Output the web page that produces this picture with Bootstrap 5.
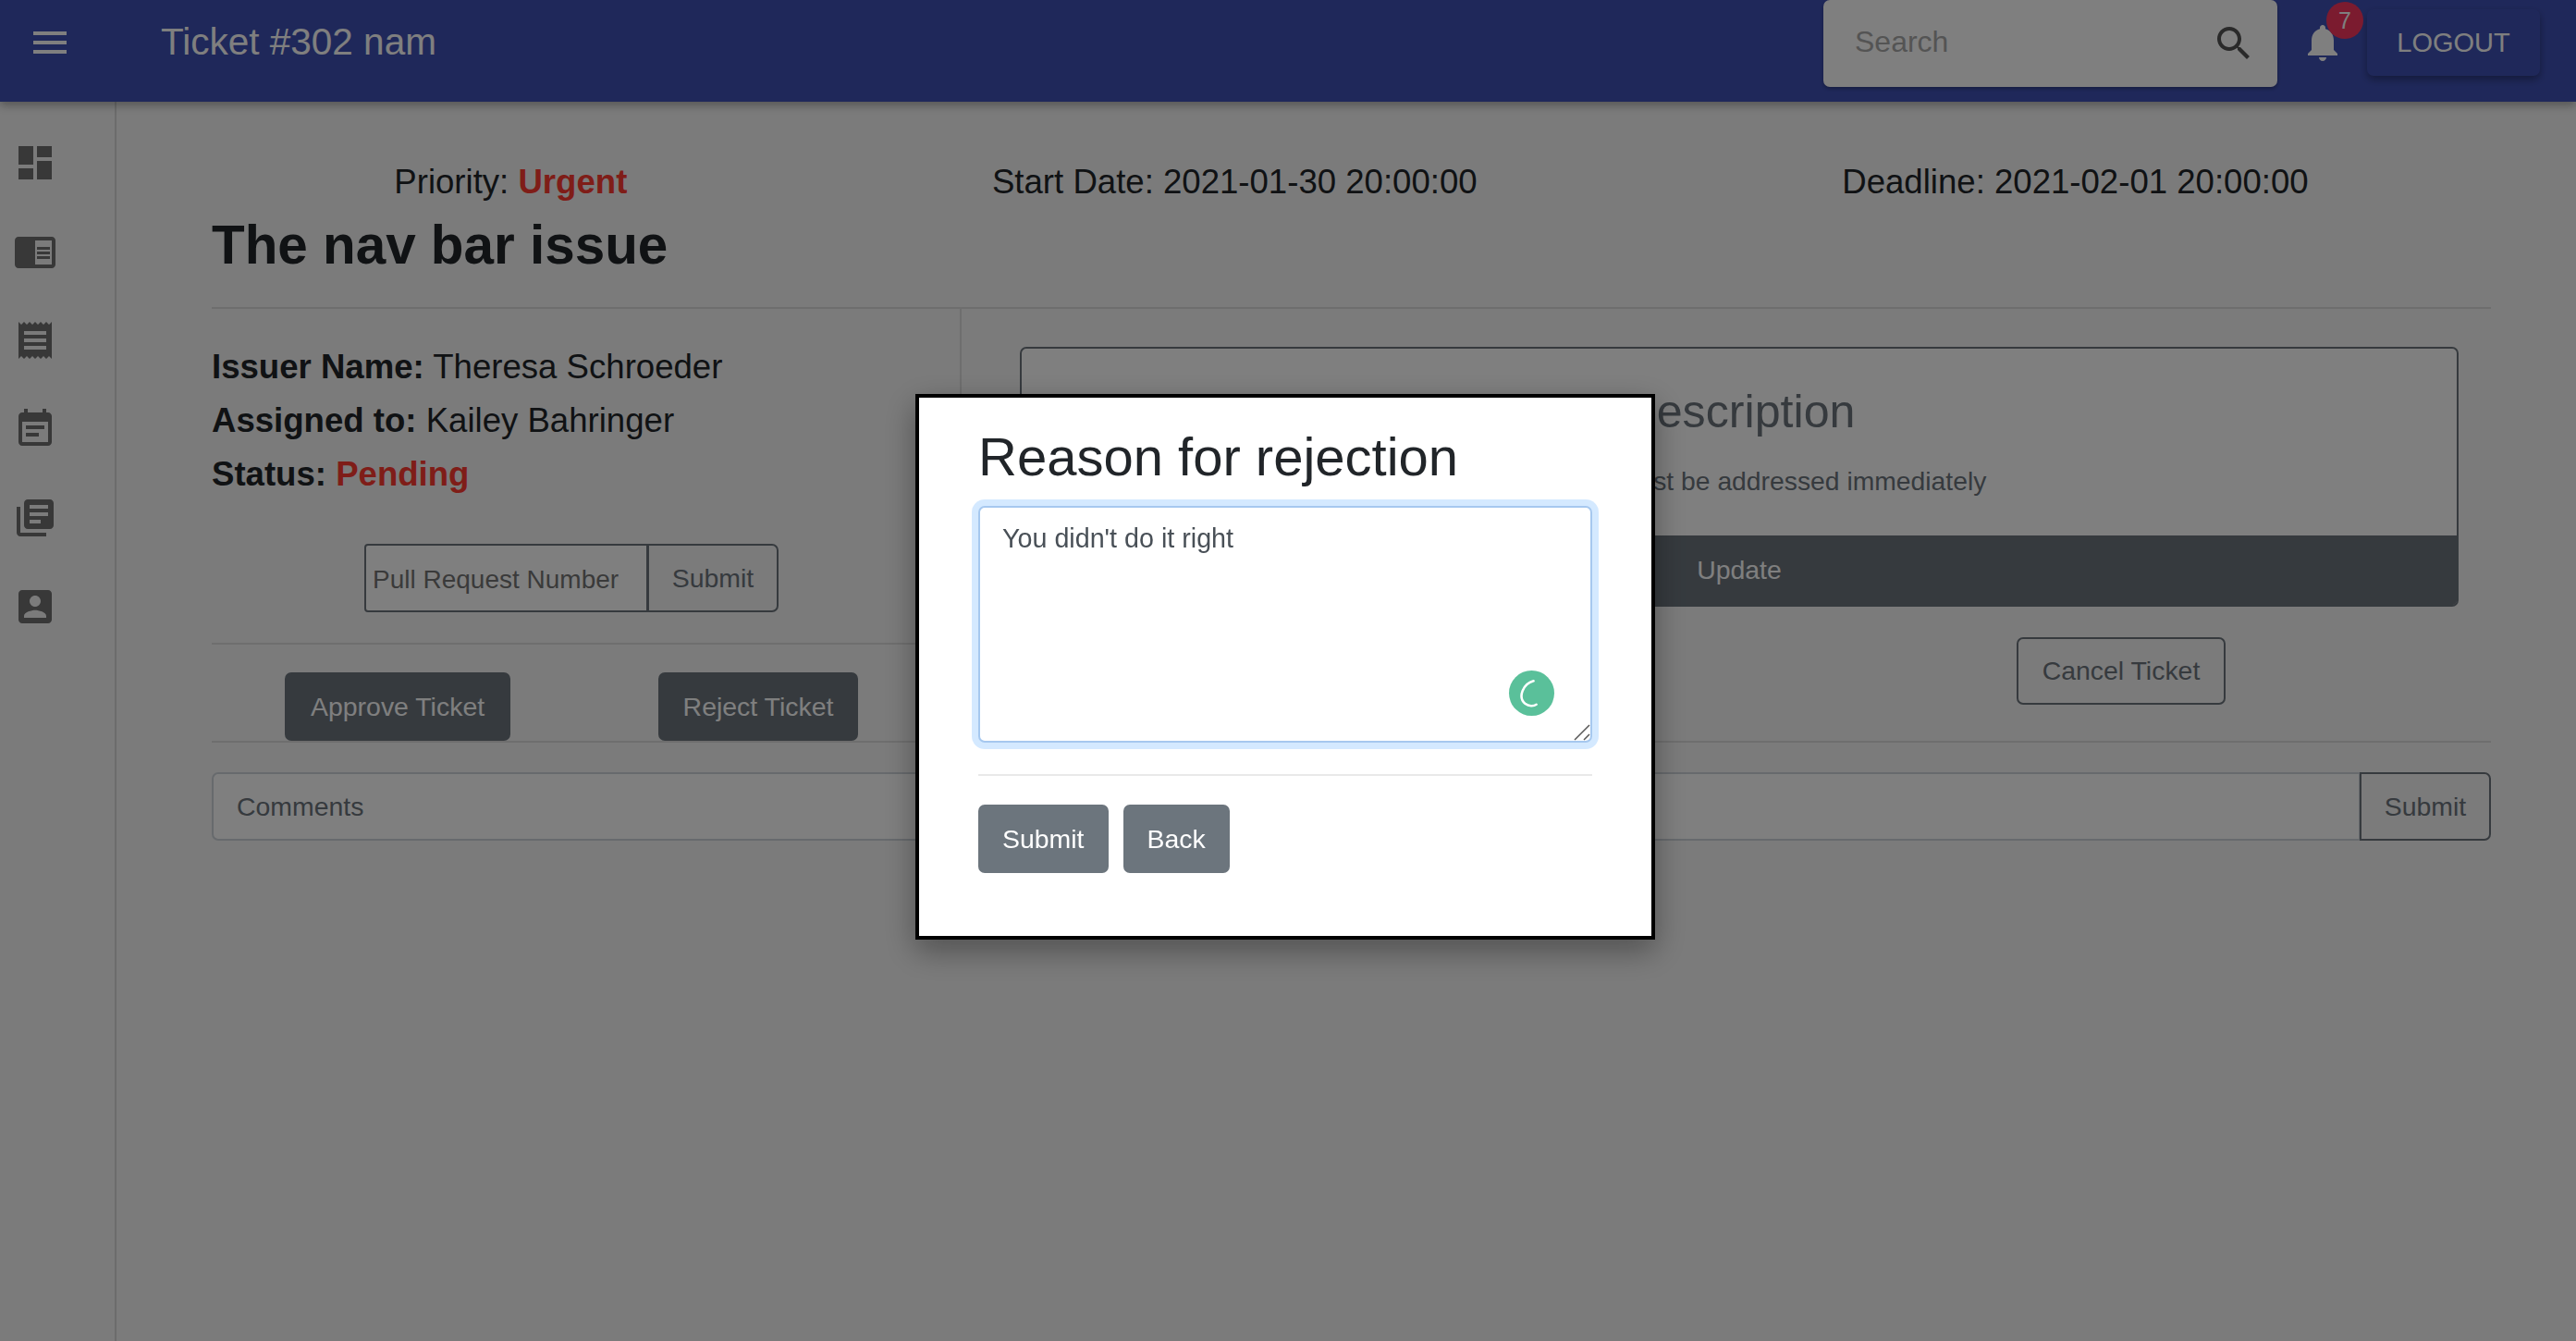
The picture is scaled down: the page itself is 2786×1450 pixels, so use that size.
<!DOCTYPE html>
<html lang="en">
<head>
    <meta charset="UTF-8">
    <meta name="viewport" content="width=device-width, initial-scale=1.0">
    <title>Ticket #302</title>
    <link rel="stylesheet" href="https://cdn.jsdelivr.net/npm/bootstrap@5.3.0/dist/css/bootstrap.min.css">
    <style>
        html { font-size: 28.44px; }
        body { font-family: "Liberation Sans", Arial, sans-serif; background: #f6f6f6; color: #212529; min-height: 100vh; overflow: hidden; }

        .btn { font-size: 28.44px; padding: 13px 26px; border-width: 2px; border-radius: 7px; line-height: 44px; }

        /* top bar */
        .appbar { height: 110px; background: #3f51b5; padding: 0 39px 0 30px; box-shadow: 0 4px 9px rgba(0,0,0,.3); position: relative; z-index: 2; flex-wrap: nowrap; justify-content: flex-start; align-items: flex-start; }
        .appbar-ico { width: 48px; height: 48px; fill: #fff; display: block; margin-top: 22px; }
        .appbar-title { font-size: 40.5px; line-height: 46px; color: #fff; margin: 22px 0 0 96px; }
        .searchbox { width: 491px; height: 94px; background: #fff; border-radius: 7px; margin-left: auto; padding: 0 23px 4px 34px; box-shadow: 0 2px 4px rgba(0,0,0,.3); }
        .searchbox span { font-size: 32px; color: #a9a9a9; }
        .searchbox svg { width: 48px; height: 48px; fill: #555; margin-top: 4px; }
        .bell-wrap { margin-left: 25px; width: 48px; position: relative; }
        .bell-count { position: absolute; left: 28px; top: 2px; width: 40px; height: 40px; border-radius: 50%; background: #f6365f; color: #fff; font-size: 25px; line-height: 40px; text-align: center; }
        .logout-btn { margin: 10px 0 0 24px; width: 187px; height: 72px; padding: 0; background: #3f51b5; border: 0; color: #fff; font-size: 29px; border-radius: 7px; box-shadow: 0 4px 8px rgba(0,0,0,.35); line-height: 72px; }
        .logout-btn:hover { background: #3f51b5; color: #fff; }

        /* side bar */
        .sidebar { width: 126px; flex: none; border-right: 2px solid rgba(0,0,0,.12); padding: 42px 0 0 14px; min-height: 1340px; }
        .side-ico { width: 48px; height: 48px; fill: rgba(0,0,0,.54); display: block; margin-bottom: 48px; }

        /* ticket */
        .ticket { flex: 1; padding: 66px 92px 0 103px; }
        .ticket-top { margin-bottom: 12px; }
        .ticket-top h5, .info-line { font-size: 36.6px; line-height: 42.67px; margin: 0; }
        .red-text { color: #ff3b30; font-weight: 700; }
        .ticket-name { font-weight: 700; font-size: 58.4px; margin: 0; line-height: 68px; }
        .rule { margin: 0; border: 0; border-top: 2px solid rgba(0,0,0,.1); opacity: 1; }
        .rule-top { margin-top: 33px; }
        .left-side { width: 809px; flex: none; padding-top: 42px; }
        .info-line { margin-bottom: 15.3px; }
        .pr-group { width: 449px; margin: 54px 0 33px 165px; height: 74px; flex-wrap: nowrap; }
        .pr-group .form-control { font-size: 28px; width: 307px; flex: none; padding: 4px 7px 0; border: 2px solid #6c757d; background: #fff; border-radius: 4px 0 0 4px; }
        .pr-group .form-control::placeholder { color: #757575; }
        .pr-group .btn { width: 142px; padding: 0; margin-left: -2px; }
        .verdict { padding: 30px 0 0 79px; gap: 160px; }
        .verdict .btn:last-child { padding: 13px 24.5px; }
        .right-side { flex: 1; border-left: 2px solid rgba(0,0,0,.1); padding: 41px 35px 38px 63px; }
        .desc-card { border: 2px solid #6c757d; border-radius: 7px; height: 281px; overflow: hidden; color: #6c757d; background: #fff; }
        .desc-card .card-body { padding: 39px 20px 0; }
        .desc-card h3 { font-size: 50.2px; margin-bottom: 24px; line-height: 59.7px; }
        .desc-card p { margin: 0; font-size: 28.3px; line-height: 42.67px; }
        .desc-card .btn { border-radius: 0; height: 75px; margin-top: auto; }
        .cancel-wrap { padding: 33px 0 0 1078px; }
        .cancel-wrap .btn { width: 226px; height: 73px; padding: 0; white-space: nowrap; line-height: 69px; }
        .comment-group { margin-top: 32px; height: 74px; }
        .comment-group .form-control { font-size: 28.44px; padding: 0 25px; border: 2px solid #ced4da; border-radius: 7px 0 0 7px; }
        .comment-group .form-control::placeholder { color: #6c757d; }
        .comment-group .btn { width: 142px; padding: 0; margin-left: 0; }

        /* rejection popup */
        .reject-box { position: fixed; left: 990px; top: 426px; width: 800px; height: 590px; z-index: 1060; background: #fff; border: 4px solid #000; border-radius: 0; box-shadow: 0 12px 32px rgba(0,0,0,.35); padding: 30px 64px 0; display: block; }
        .reject-box h2 { margin: 0 0 19px; font-size: 58px; line-height: 68px; color: #212529; }
        .reject-box textarea { height: 256px; font-size: 28.7px; color: #495057; padding: 12px 24px; border: 2px solid #a6c8ef; border-radius: 7px; box-shadow: 0 0 0 7px rgba(0,123,255,.17); resize: none; }
        .reject-box textarea:focus { color: #495057; border-color: #a6c8ef; box-shadow: 0 0 0 7px rgba(0,123,255,.17); }
        .grip-lines { position: absolute; right: 2px; bottom: 2px; width: 18px; height: 18px; }
        .grammar-dot { position: absolute; right: 41px; bottom: 29px; width: 49px; height: 49px; border-radius: 50%; background: #5ac09a; }
        .grammar-dot svg { display: block; width: 49px; height: 49px; }
        .reject-box hr { margin: 34px 0 31px; border: 0; border-top: 2px solid #e9e9e9; opacity: 1; }
        .reject-actions { gap: 16px; }
        .reject-actions .btn { padding: 13px 24px; }
    </style>
</head>
<body>

    <nav class="navbar appbar d-flex">
        <svg class="appbar-ico" viewBox="0 0 24 24"><path d="M3 18h18v-2H3v2zm0-5h18v-2H3v2zm0-7v2h18V6H3z"/></svg>
        <div class="appbar-title">Ticket #302 nam</div>
        <div class="searchbox d-flex align-items-center justify-content-between">
            <span>Search</span>
            <svg viewBox="0 0 24 24"><path d="M15.5 14h-.79l-.28-.27C15.41 12.59 16 11.11 16 9.5 16 5.91 13.09 3 9.5 3S3 5.91 3 9.5 5.91 16 9.5 16c1.61 0 3.09-.59 4.23-1.57l.27.28v.79l5 4.99L20.49 19l-4.99-5zm-6 0C7.01 14 5 11.99 5 9.5S7.01 5 9.5 5 14 7.01 14 9.5 11.99 14 9.5 14z"/></svg>
        </div>
        <div class="bell-wrap">
            <svg class="appbar-ico" viewBox="0 0 24 24"><path d="M12 22c1.1 0 2-.9 2-2h-4c0 1.1.89 2 2 2zm6-6v-5c0-3.07-1.64-5.64-4.5-6.32V4c0-.83-.67-1.5-1.5-1.5s-1.5.67-1.5 1.5v.68C7.63 5.36 6 7.92 6 11v5l-2 2v1h16v-1l-2-2z"/></svg>
            <span class="bell-count">7</span>
        </div>
        <button type="button" class="btn logout-btn">LOGOUT</button>
    </nav>

    <div class="d-flex">
        <div class="sidebar">
            <svg class="side-ico" viewBox="0 0 24 24"><path d="M3 13h8V3H3v10zm0 8h8v-6H3v6zm10 0h8V11h-8v10zm0-18v6h8V3h-8z"/></svg>
            <svg class="side-ico" viewBox="0 0 24 24"><path d="M13 12h7v1.5h-7zm0-2.5h7V11h-7zm0 5h7V16h-7zM21 4H3c-1.1 0-2 .9-2 2v13c0 1.1.9 2 2 2h18c1.1 0 2-.9 2-2V6c0-1.1-.9-2-2-2zm0 15h-9V6h9v13z"/></svg>
            <svg class="side-ico" viewBox="0 0 24 24"><path d="M18 17H6v-2h12v2zm0-4H6v-2h12v2zm0-4H6V7h12v2zM3 22l1.5-1.5L6 22l1.5-1.5L9 22l1.5-1.5L12 22l1.5-1.5L15 22l1.5-1.5L18 22l1.5-1.5L21 22V2l-1.5 1.5L18 2l-1.5 1.5L15 2l-1.5 1.5L12 2l-1.5 1.5L9 2 7.5 3.5 6 2 4.5 3.5 3 2v20z"/></svg>
            <svg class="side-ico" viewBox="0 0 24 24"><path d="M17 10H7v2h10v-2zm2-7h-1V1h-2v2H8V1H6v2H5c-1.11 0-1.99.9-1.99 2L3 19c0 1.1.89 2 2 2h14c1.1 0 2-.9 2-2V5c0-1.1-.9-2-2-2zm0 16H5V8h14v11zm-5-5H7v2h7v-2z"/></svg>
            <svg class="side-ico" viewBox="0 0 24 24"><path d="M4 6H2v14c0 1.1.9 2 2 2h14v-2H4V6zm16-4H8c-1.1 0-2 .9-2 2v12c0 1.1.9 2 2 2h12c1.1 0 2-.9 2-2V4c0-1.1-.9-2-2-2zm-1 9H9V9h10v2zm-4 4H9v-2h6v2zm4-8H9V5h10v2z"/></svg>
            <svg class="side-ico" viewBox="0 0 24 24"><path d="M3 5v14c0 1.1.89 2 2 2h14c1.1 0 2-.9 2-2V5c0-1.1-.9-2-2-2H5c-1.11 0-2 .9-2 2zm12 4c0 1.66-1.34 3-3 3s-3-1.34-3-3 1.34-3 3-3 3 1.34 3 3zm-9 8c0-2 4-3.1 6-3.1s6 1.1 6 3.1v1H6v-1z"/></svg>
        </div>

        <div class="ticket">
            <div class="ticket-top d-flex justify-content-around">
                <h5>Priority: <span class="red-text">Urgent</span></h5>
                <h5>Start Date: 2021-01-30 20:00:00</h5>
                <h5>Deadline: 2021-02-01 20:00:00</h5>
            </div>
            <h2 class="ticket-name">The nav bar issue</h2>
            <hr class="rule rule-top">

            <div class="d-flex">
                <div class="left-side">
                    <div class="info-line"><b>Issuer Name:</b> Theresa Schroeder</div>
                    <div class="info-line"><b>Assigned to:</b> Kailey Bahringer</div>
                    <div class="info-line"><b>Status:</b> <span class="red-text">Pending</span></div>
                    <div class="input-group pr-group">
                        <input type="text" class="form-control" placeholder="Pull Request Number">
                        <button type="button" class="btn btn-outline-secondary">Submit</button>
                    </div>
                    <hr class="rule">
                    <div class="verdict d-flex">
                        <button type="button" class="btn btn-secondary">Approve Ticket</button>
                        <button type="button" class="btn btn-secondary">Reject Ticket</button>
                    </div>
                </div>

                <div class="right-side">
                    <div class="card desc-card text-center">
                        <div class="card-body">
                            <h3>Description</h3>
                            <p>This issue must be addressed immediately</p>
                        </div>
                        <button type="button" class="btn btn-secondary w-100">Update</button>
                    </div>
                    <div class="cancel-wrap">
                        <button type="button" class="btn btn-outline-secondary">Cancel Ticket</button>
                    </div>
                </div>
            </div>

            <hr class="rule">
            <div class="input-group comment-group">
                <input type="text" class="form-control" placeholder="Comments">
                <button type="button" class="btn btn-outline-secondary">Submit</button>
            </div>
        </div>
    </div>

    <div class="modal-backdrop show"></div>

    <div class="modal-content reject-box">
        <h2>Reason for rejection</h2>
        <div class="position-relative">
            <textarea class="form-control">You didn't do it right</textarea>
            <div class="grammar-dot">
                <svg viewBox="0 0 48 48"><path d="M26 11C15 14 9 28 17 35c4 3 9 3 12 1" fill="none" stroke="#fff" stroke-width="2.5" stroke-linecap="round"/></svg>
            </div>
            <svg class="grip-lines" viewBox="0 0 18 18"><path d="M1 17L17 1M11 17l6-6" stroke="#555" stroke-width="1.5" fill="none"/></svg>
        </div>
        <hr>
        <div class="d-flex reject-actions">
            <button type="button" class="btn btn-secondary">Submit</button>
            <button type="button" class="btn btn-secondary">Back</button>
        </div>
    </div>

    <script src="https://cdn.jsdelivr.net/npm/bootstrap@5.3.0/dist/js/bootstrap.bundle.min.js"></script>
</body>
</html>
